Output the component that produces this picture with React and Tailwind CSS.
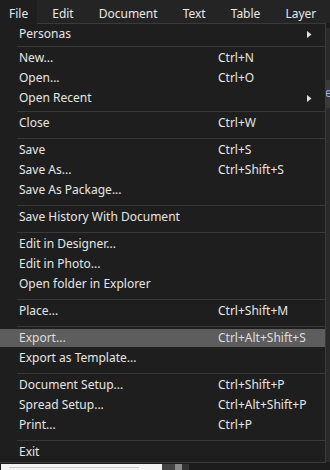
import React from "react";

const bar = ["Edit", "Document", "Text", "Table", "Layer"];

// sep entries carry the space above their line
const items = [
  { label: "Personas", sub: true },
  { sep: "pt-[2px]" },
  { label: "New...", key: "Ctrl+N" },
  { label: "Open...", key: "Ctrl+O" },
  { label: "Open Recent", sub: true },
  { sep: "pt-[3px]" },
  { label: "Close", key: "Ctrl+W" },
  { sep: "pt-[5px]" },
  { label: "Save", key: "Ctrl+S" },
  { label: "Save As...", key: "Ctrl+Shift+S" },
  { label: "Save As Package..." },
  { sep: "pt-[5px]" },
  { label: "Save History With Document" },
  { sep: "pt-[5px]" },
  { label: "Edit in Designer..." },
  { label: "Edit in Photo..." },
  { label: "Open folder in Explorer" },
  { sep: "pt-[5px]" },
  { label: "Place...", key: "Ctrl+Shift+M" },
  { sep: "pt-[5px]" },
  { label: "Export...", key: "Ctrl+Alt+Shift+S", active: true },
  { label: "Export as Template..." },
  { sep: "pt-[5px]" },
  { label: "Document Setup...", key: "Ctrl+Shift+P" },
  { label: "Spread Setup...", key: "Ctrl+Alt+Shift+P" },
  { label: "Print...", key: "Ctrl+P" },
  { sep: "pt-[5px]" },
  { label: "Exit" },
];

function Arrow() {
  return (
    <svg width="5" height="7" viewBox="0 0 5 7" className="mr-[13px]">
      <path d="M0 0 L4.5 3.5 L0 7 Z" fill="#e0e0e0" />
    </svg>
  );
}

function Row({ item }) {
  if (item.sep) {
    return (
      <div className={`${item.sep} pb-px`}>
        <div className="ml-[17px] h-px bg-[#383838]" />
      </div>
    );
  }
  return (
    <div className="h-[20px] py-px">
      <div
        className={`h-full flex items-center pl-[19px] ${
          item.active ? "bg-[#5d5d5d] text-[#dedede]" : "text-[#e6e6e6]"
        }`}
      >
        <span className="w-[199px] shrink-0 whitespace-nowrap">{item.label}</span>
        <span className="flex-1 whitespace-nowrap">{item.key}</span>
        {item.sub && <Arrow />}
      </div>
    </div>
  );
}

export default function App() {
  return (
    <div className="relative w-[330px] h-[470px] overflow-hidden bg-[#1c1c1c] text-[12px] leading-[20px] font-['Noto_Sans',sans-serif] flex flex-col">
      {/* menu bar */}
      <div className="h-[23px] flex items-start bg-[#242424] text-[#e8e8e8] shrink-0">
        <div className="relative z-10 h-[24px] px-[9px] pt-[4px] bg-[#1e1e1e]">File</div>
        <div className="flex gap-[25px] ml-[15px] pt-[4px]">
          {bar.map((b) => (
            <div key={b}>{b}</div>
          ))}
        </div>
      </div>

      {/* workspace behind the menu */}
      <div className="flex-1 flex">
        <div className="flex-1 flex flex-col">
          <div className="mt-auto flex items-end h-[7px]">
            <div className="ml-px w-[161px] h-[6px] bg-[#f4f4f4] flex items-center pl-[8px]">
              <div className="w-[130px] h-px bg-[#c8c8c8]" />
            </div>
            <div className="w-[13px] h-[6px] bg-[#444]" />
            <div className="w-[7px] h-[6px] bg-[#8a8a8a]" />
            <div className="w-[7px] h-[6px] bg-[#333]" />
          </div>
        </div>
        <div className="w-[4px] mt-[5px] mb-[8px] bg-[#2a2a2a] flex flex-col">
          <div className="mt-[52px] h-[28px] bg-[#3a3a3a] text-[#8fb0e0] overflow-hidden leading-[26px] -indent-[1px]">e</div>
        </div>
      </div>

      {/* File dropdown */}
      <div className="absolute left-0 top-[23px] w-[326px] bg-[#1e1e1e] border-t border-r border-b border-[#3a3a3a]">
        {items.map((it, i) => (
          <Row key={i} item={it} />
        ))}
      </div>
    </div>
  );
}
